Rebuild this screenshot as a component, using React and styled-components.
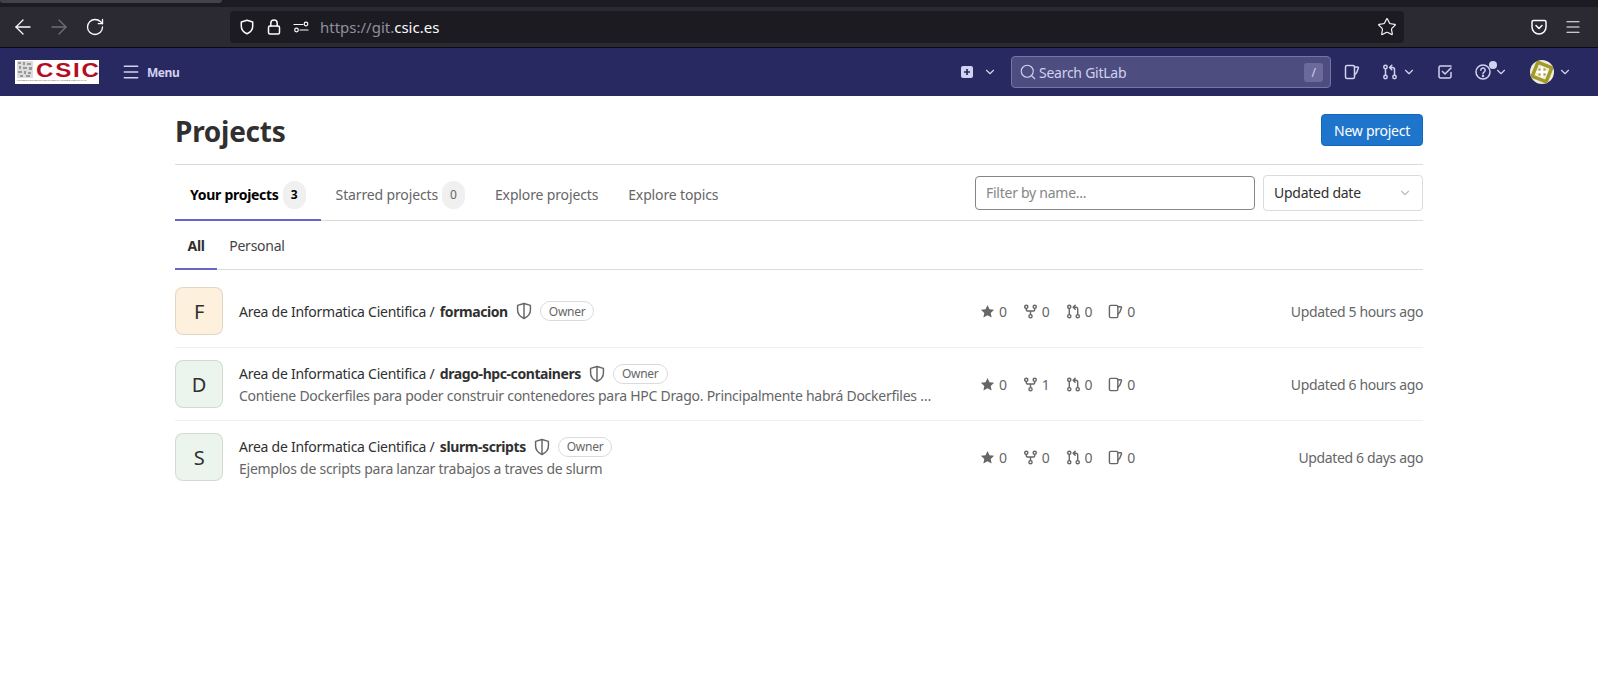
import React from 'react';
import styled, { createGlobalStyle } from 'styled-components';
import { ArrowLeft, ArrowRight, RotateCw, Star, Menu as MenuLines, Search, ChevronDown } from 'lucide-react';

const Global = createGlobalStyle`
  html, body { margin: 0; padding: 0; background: #fff; }
  body { font-family: "Noto Sans", "Open Sans", sans-serif; font-size: 14px; color: #303030; letter-spacing: -0.26px; }
  * { box-sizing: border-box; }
`;

const Page = styled.div`width: 1598px; height: 678px; overflow: hidden; background: #fff;`;

/* browser chrome */
const TabStrip = styled.div`height: 7px; background: #1c1b22;`;
const TabStub = styled.div`width: 222px; height: 3px; background: #42414d; border-radius: 0 0 4px 4px;`;
const BrowserBar = styled.div`
  height: 41px; background: #2b2a33; border-bottom: 1px solid #0c0c0d;
  display: flex; align-items: center; padding: 0 0 0 5px; color: #fbfbfe;
`;
const NavButtons = styled.div`display: flex; align-items: center; width: 225px;`;
const NavSlot = styled.div`width: 36px; display: flex; justify-content: center; align-items: center;`;
const UrlBar = styled.div`
  width: 1174px; height: 32px; background: #1c1b22; border-radius: 4px;
  display: flex; align-items: center; padding: 0 7px 0 9px;
`;
const UrlIcons = styled.div`display: flex; align-items: center; gap: 11px; margin-right: 11px;`;
const UrlText = styled.span`
  font-size: 15px; letter-spacing: 0; color: #8f8f9d; flex: 1;
  b { font-weight: 400; color: #fbfbfe; }
`;
const BarEnd = styled.div`display: flex; align-items: center; gap: 16px; margin-left: 126px;`;

/* gitlab nav */
const TopNav = styled.div`
  height: 48px; background: #292961; display: flex; align-items: center; padding: 0 26px 0 15px; color: #d1d1f0;
`;
const Logo = styled.div`
  width: 84px; height: 24px; background: #fff; display: grid; grid-template-columns: 19px 1fr; grid-template-rows: 18px 4px; padding: 1px 1px 1px 2px; flex: none; letter-spacing: 0;
`;
const LogoWord = styled.div`
  font-family: "Liberation Sans", sans-serif; font-weight: 700; color: #b20f24; font-size: 20px; line-height: 18px; letter-spacing: 1.5px; transform: scaleX(1.2); transform-origin: left;
`;
const LogoSub = styled.div`
  grid-column: 1 / 3; font-family: "Liberation Sans", sans-serif; font-size: 2.4px; line-height: 4px; color: #666; white-space: nowrap; letter-spacing: 0.05px;
`;
const MenuBtn = styled.div`
  display: flex; align-items: center; gap: 6px; margin-left: 22px; font-size: 12px; font-weight: 700; color: #d1d1f0; letter-spacing: -0.45px;
`;
const NavRight = styled.div`display: flex; align-items: center; margin-left: auto;`;
const IconSlot = styled.div`display: flex; align-items: center; margin-left: ${p => p.$ml || 0}px; position: relative; color: #d1d1f0;`;
const SearchBox = styled.div`
  width: 320px; height: 32px; background: #4d4d80; border: 1px solid #7575a8; border-radius: 4px;
  display: flex; align-items: center; padding: 0 7px; gap: 2px; margin-left: 14px; color: #d1d1f0; font-size: 14px;
`;
const SlashKey = styled.span`
  margin-left: auto; width: 19px; height: 19px; background: #6a6a9c; border-radius: 3px; font-size: 12px; display: flex; align-items: center; justify-content: center;
`;
const Dot = styled.span`
  position: absolute; top: -3px; left: 14px; width: 8px; height: 8px; border-radius: 50%; background: #d1d1f0;
`;
const Avatar = styled.div`width: 24px; height: 24px; border-radius: 50%; overflow: hidden; display: flex;`;

/* content */
const Main = styled.main`width: 1248px; margin: 0 auto;`;
const Header = styled.div`
  height: 69px; border-bottom: 1px solid #dbdbdb; display: flex; align-items: center; justify-content: space-between;
`;
const Title = styled.h1`margin: 0; padding-top: 2px; font-size: 28px; font-weight: 700; color: #303030; line-height: 36px;`;
const PrimaryBtn = styled.button`
  height: 32px; padding: 0 12px; background: #1f75cb; border: 1px solid #1068bf; border-radius: 4px; color: #fff; font: inherit; font-size: 14px; letter-spacing: inherit;
`;
const TabRow = styled.div`
  height: 56px; border-bottom: 1px solid #dbdbdb; display: flex; align-items: stretch; justify-content: space-between;
`;
const Tabs = styled.div`display: flex; align-items: stretch;`;
const Tab = styled.div`
  display: flex; align-items: center; gap: 4px; padding: 5px 15px 0; margin-bottom: -1px; font-size: 14px; white-space: nowrap;
  color: ${p => p.$active ? '#000' : '#666'}; font-weight: ${p => p.$active ? 700 : 400};
  letter-spacing: ${p => p.$active ? -0.28 : -0.14}px;
  border-bottom: 2px solid ${p => p.$active ? '#6666c4' : 'transparent'};
`;
const Count = styled.span`
  width: 23px; height: 28px; border-radius: 12px; background: #f0f0f0; font-size: 12px; display: flex; align-items: center; justify-content: center;
  color: ${p => p.$active ? '#000' : '#666'};
`;
const Filters = styled.div`display: flex; align-items: center; gap: 8px;`;
const FilterInput = styled.input`
  width: 280px; height: 34px; border: 1px solid #868686; border-radius: 4px; padding: 0 10px; font: inherit; font-size: 14px; letter-spacing: inherit;
  &::placeholder { color: #868686; opacity: 1; }
`;
const SortBox = styled.div`
  width: 160px; height: 36px; border: 1px solid #dbdbdb; border-radius: 4px; display: flex; align-items: center; justify-content: space-between; padding: 0 10px; color: #303030;
`;
const SubTabs = styled.div`height: 49px; border-bottom: 1px solid #dbdbdb; display: flex;`;
const SubTab = styled.div`
  display: flex; align-items: center; padding: 2px ${p => p.$active ? 12.5 : 12}px 0; margin-bottom: -1px;
  color: ${p => p.$active ? '#303030' : '#444'}; font-weight: ${p => p.$active ? 700 : 400};
  border-bottom: 2px solid ${p => p.$active ? '#6666c4' : 'transparent'};
`;
const Row = styled.div`
  display: flex; align-items: center; height: ${p => p.$first ? 78 : 73}px; padding-top: ${p => p.$first ? 5 : 0}px;
  border-bottom: 1px solid ${p => p.$last ? 'transparent' : '#f0f0f0'};
`;
const ProjectAvatar = styled.div`
  width: 48px; height: 48px; border-radius: 8px; flex: none; display: flex; align-items: center; justify-content: center;
  font-size: 20px; color: #303030; background: ${p => p.$bg}; border: 1px solid rgba(31,30,36,.12);
`;
const Info = styled.div`width: 695px; margin-left: 16px; flex: none; min-width: 0;`;
const NameLine = styled.div`display: flex; align-items: center; color: #303030; height: 22px; white-space: nowrap; b { font-weight: 700; letter-spacing: -0.42px; margin-left: 2px; }`;
const Vis = styled.span`display: flex; margin-left: 7px; color: #666;`;
const Role = styled.span`
  margin-left: 7px; height: 20px; padding: 0 8px; border: 1px solid #dbdbdb; border-radius: 10px; font-size: 12px; color: #666; display: flex; align-items: center;
`;
const Desc = styled.div`color: #666; white-space: nowrap; line-height: 21px;`;
const Stats = styled.div`display: flex; align-items: center; gap: 16px; margin-left: 46px; color: #666; flex: none;`;
const Stat = styled.span`display: flex; align-items: center; gap: 4px;`;
const Updated = styled.div`margin-left: auto; color: #666; white-space: nowrap; letter-spacing: -0.36px;`;

const S = { fill: 'none', stroke: 'currentColor', strokeWidth: 1.5, strokeLinecap: 'round', strokeLinejoin: 'round' };

const ShieldIcon = ({ size = 16, half }) => (
  <svg width={size} height={size} viewBox="0 0 16 16" {...S} strokeWidth={half ? 1.3 : 1.5}>
    <path d="M8 1.300 13.700 3v4.200c0 3.400-2.300 6-5.700 7.500C4.600 13.200 2.300 10.600 2.300 7.200V3z" />
    {half && <path d="M8 1.500v13" />}
  </svg>
);
const LockIcon = () => (
  <svg width="16" height="16" viewBox="0 0 16 16" {...S}>
    <rect x="2.500" y="7" width="11" height="8" rx="1.500" />
    <path d="M4.800 7V4.300a3.200 3.200 0 0 1 6.400 0V7" />
  </svg>
);
const PermIcon = () => (
  <svg width="16" height="16" viewBox="0 0 16 16" {...S} strokeWidth="1.200">
    <path d="M1 5.500h9M7 11h8" />
    <circle cx="13" cy="5" r="1.800" />
    <circle cx="3.500" cy="11" r="1.800" />
  </svg>
);
const PocketIcon = () => (
  <svg width="18" height="18" viewBox="0 0 18 18" {...S}>
    <path d="M3.500 2.500h11a1.500 1.500 0 0 1 1.500 1.500v5a7 7 0 0 1-14 0V4a1.500 1.500 0 0 1 1.500-1.500z" />
    <path d="M6 7.500l3 3 3-3" />
  </svg>
);
const PlusSquare = () => (
  <svg width="12" height="12" viewBox="0 0 12 12">
    <rect width="12" height="12" rx="2" fill="currentColor" />
    <path d="M6 3v6M3 6h6" stroke="#292961" strokeWidth="1.700" />
  </svg>
);
const IssueIcon = ({ size = 16 }) => (
  <svg width={size} height={size} viewBox="0 0 16 16" {...S}>
    <rect x="1.500" y="1.500" width="9" height="13" rx="1.500" />
    <path d="M10.500 3h3.300c.5 0 .8.500.6 1l-1.700 4.500-2.200 2.500" />
  </svg>
);
const MrIcon = ({ size = 16 }) => (
  <svg width={size} height={size} viewBox="0 0 16 16" {...S}>
    <circle cx="3.500" cy="3" r="1.700" />
    <circle cx="3.500" cy="13" r="1.700" />
    <circle cx="12.500" cy="13" r="1.700" />
    <path d="M3.500 4.700v6.600M12.500 11.300V5.500a2 2 0 0 0-2-2H8M9.800 1.300 7.600 3.500l2.200 2.200" />
  </svg>
);
const ForkIcon = ({ size = 16 }) => (
  <svg width={size} height={size} viewBox="0 0 16 16" {...S}>
    <circle cx="3.500" cy="3" r="1.700" />
    <circle cx="12.500" cy="3" r="1.700" />
    <circle cx="8" cy="13" r="1.700" />
    <path d="M3.500 4.700v.8a2 2 0 0 0 2 2h5a2 2 0 0 0 2-2v-.8M8 7.500v3.800" />
  </svg>
);
const StarIcon = ({ size = 16 }) => (
  <svg width={size} height={size} viewBox="0 0 16 16" fill="currentColor">
    <path d="M8 1l2.100 4.600 5 .6-3.700 3.400 1 4.900L8 12.100l-4.400 2.400 1-4.900L.9 6.200l5-.6z" />
  </svg>
);
const TodoIcon = () => (
  <svg width="16" height="16" viewBox="0 0 16 16" {...S}>
    <path d="M14 8.500v4a1.500 1.500 0 0 1-1.500 1.500h-9A1.500 1.500 0 0 1 2 12.500v-9A1.500 1.500 0 0 1 3.500 2H14" />
    <path d="M5.500 7.500l2.500 2.500 6-6" />
  </svg>
);
const HelpIcon = () => (
  <svg width="16" height="16" viewBox="0 0 16 16" {...S}>
    <circle cx="8" cy="8" r="7" />
    <path d="M5.800 6.200a2.200 2.200 0 1 1 3.300 1.900c-.7.400-1.100.9-1.100 1.700" />
    <circle cx="8" cy="12" r=".5" />
  </svg>
);
const Seal = () => (
  <svg width="16" height="17" viewBox="0 0 16 17">
    <rect width="16" height="17" fill="#dcdcdc" />
    <path d="M1 1h3v2H1zM6 1h2v3H6zM10 2h4v2h-4zM2 5h2v3H2zM6 6h4v2H6zM12 6h3v3h-3zM1 10h4v2H1zM7 10h2v3H7zM11 11h3v2h-3zM3 14h3v2H3zM9 14h4v2H9z" fill="#9a9a9a" />
  </svg>
);
const AvatarArt = () => (
  <svg width="24" height="24" viewBox="0 0 24 24">
    <rect width="24" height="24" fill="#eeeedd" />
    <g transform="rotate(22 12 12)" fill="none" stroke="#a39a2a" strokeWidth="3.500">
      <rect x="4.500" y="4.500" width="15" height="15" />
    </g>
    <path d="M12 6.500v11M6.500 12h11" stroke="#fff" strokeWidth="2" />
    <path d="M8.500 8.500h2v2h-2zM13.500 8.500h2v2h-2zM8.500 13.500h2v2h-2zM13.500 13.500h2v2h-2z" fill="#a39a2a" />
  </svg>
);
const Chev = ({ c }) => <ChevronDown size={14} strokeWidth={2} color={c || 'currentColor'} />;

const projects = [
  { l: 'F', bg: '#fdf1dd', name: 'formacion', forks: 0, time: 'Updated 5 hours ago' },
  { l: 'D', bg: '#ecf4ee', name: 'drago-hpc-containers', forks: 1, time: 'Updated 6 hours ago',
    desc: 'Contiene Dockerfiles para poder construir contenedores para HPC Drago. Principalmente habrá Dockerfiles …' },
  { l: 'S', bg: '#ecf4ee', name: 'slurm-scripts', forks: 0, time: 'Updated 6 days ago',
    desc: 'Ejemplos de scripts para lanzar trabajos a traves de slurm' },
];

export default function App() {
  return (
    <Page>
      <Global />
      <TabStrip><TabStub /></TabStrip>
      <BrowserBar>
        <NavButtons>
          <NavSlot><ArrowLeft size={24} strokeWidth={1.300} /></NavSlot>
          <NavSlot><ArrowRight size={24} strokeWidth={1.300} color="#6f6f78" /></NavSlot>
          <NavSlot><RotateCw size={20} strokeWidth={1.600} /></NavSlot>
        </NavButtons>
        <UrlBar>
          <UrlIcons>
            <ShieldIcon />
            <LockIcon />
            <PermIcon />
          </UrlIcons>
          <UrlText>https://git.<b>csic.es</b></UrlText>
          <Star size={20} strokeWidth={1.400} />
        </UrlBar>
        <BarEnd>
          <PocketIcon />
          <MenuLines size={18} strokeWidth={1.500} />
        </BarEnd>
      </BrowserBar>
      <TopNav>
        <Logo>
          <Seal />
          <LogoWord>CSIC</LogoWord>
          <LogoSub>CONSEJO SUPERIOR DE INVESTIGACIONES CIENTÍFICAS</LogoSub>
        </Logo>
        <MenuBtn><MenuLines size={20} strokeWidth={1.800} />Menu</MenuBtn>
        <NavRight>
          <IconSlot><PlusSquare /></IconSlot>
          <IconSlot $ml={10}><Chev /></IconSlot>
          <SearchBox>
            <Search size={18} strokeWidth={1.500} />
            Search GitLab
            <SlashKey>/</SlashKey>
          </SearchBox>
          <IconSlot $ml={13}><IssueIcon /></IconSlot>
          <IconSlot $ml={22}><MrIcon /></IconSlot>
          <IconSlot $ml={4}><Chev /></IconSlot>
          <IconSlot $ml={21}><TodoIcon /></IconSlot>
          <IconSlot $ml={22}><HelpIcon /><Dot /></IconSlot>
          <IconSlot $ml={3}><Chev /></IconSlot>
          <IconSlot $ml={22}><Avatar><AvatarArt /></Avatar></IconSlot>
          <IconSlot $ml={4}><Chev /></IconSlot>
        </NavRight>
      </TopNav>
      <Main>
        <Header>
          <Title>Projects</Title>
          <PrimaryBtn>New project</PrimaryBtn>
        </Header>
        <TabRow>
          <Tabs>
            <Tab $active>Your projects <Count $active>3</Count></Tab>
            <Tab>Starred projects <Count>0</Count></Tab>
            <Tab>Explore projects</Tab>
            <Tab>Explore topics</Tab>
          </Tabs>
          <Filters>
            <FilterInput placeholder="Filter by name..." readOnly />
            <SortBox>Updated date <Chev c="#bfbfbf" /></SortBox>
          </Filters>
        </TabRow>
        <SubTabs>
          <SubTab $active>All</SubTab>
          <SubTab>Personal</SubTab>
        </SubTabs>
        {projects.map((p, i) => (
          <Row key={p.name} $first={i === 0} $last={i === 2}>
            <ProjectAvatar $bg={p.bg}>{p.l}</ProjectAvatar>
            <Info>
              <NameLine>
                Area de Informatica Cientifica /&nbsp;<b>{p.name}</b>
                <Vis><ShieldIcon half size={18} /></Vis>
                <Role>Owner</Role>
              </NameLine>
              {p.desc && <Desc>{p.desc}</Desc>}
            </Info>
            <Stats>
              <Stat><StarIcon size={15} />0</Stat>
              <Stat><ForkIcon size={15} />{p.forks}</Stat>
              <Stat><MrIcon size={15} />0</Stat>
              <Stat><IssueIcon size={15} />0</Stat>
            </Stats>
            <Updated>{p.time}</Updated>
          </Row>
        ))}
      </Main>
    </Page>
  );
}
